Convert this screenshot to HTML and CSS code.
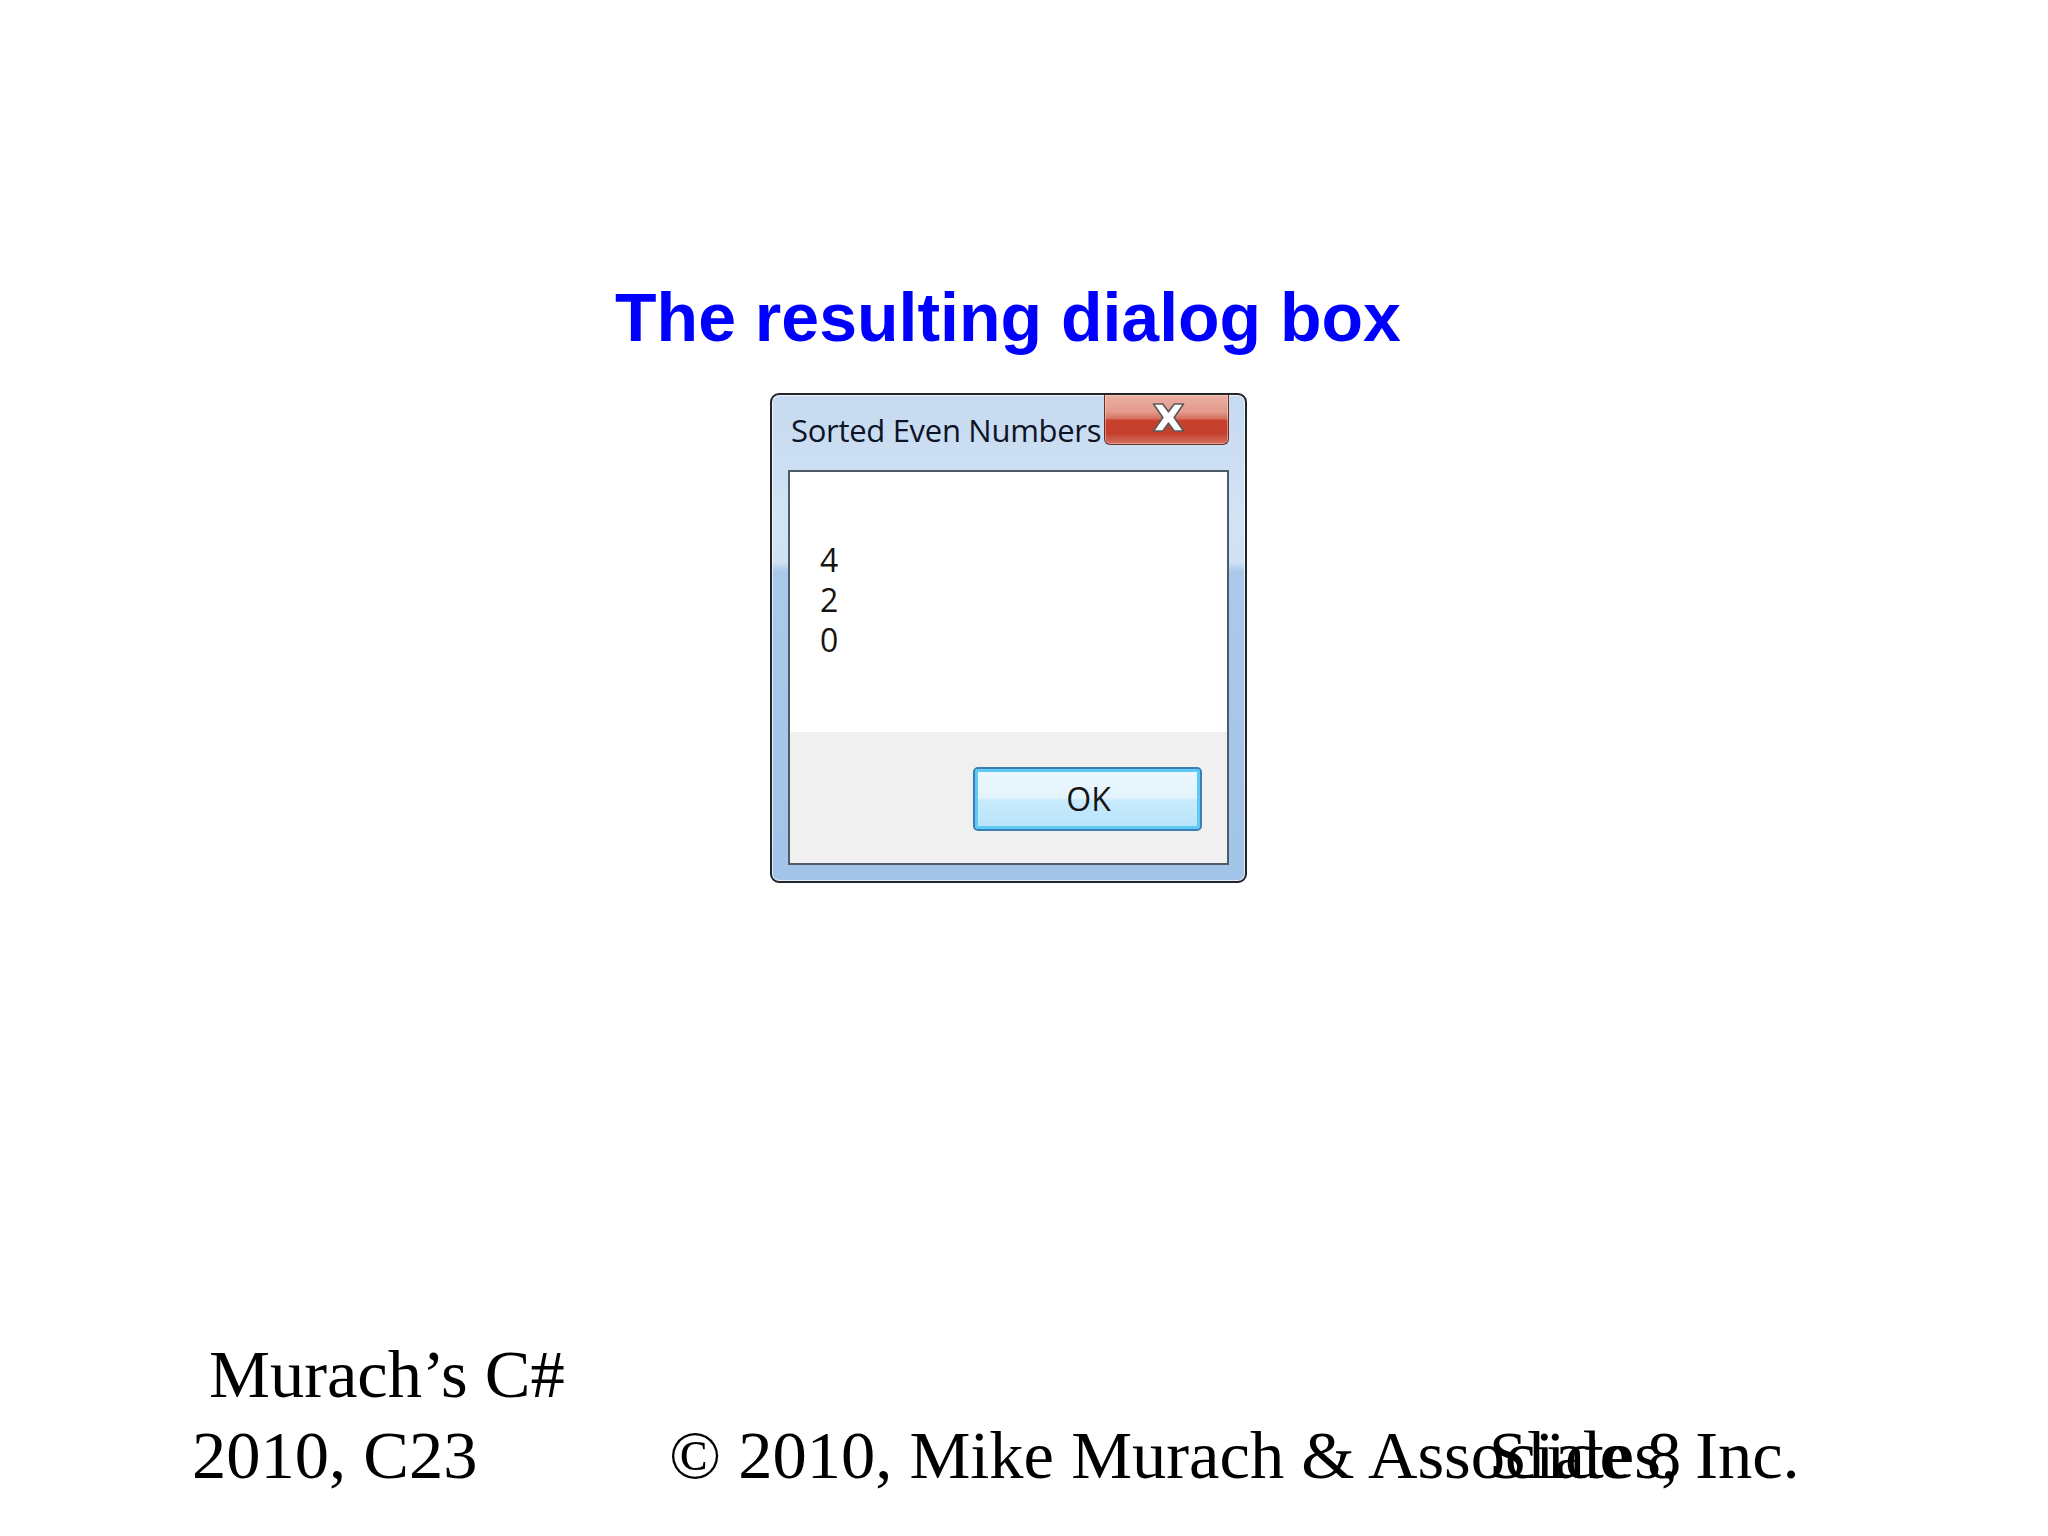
FILE: index.html
```html
<!DOCTYPE html>
<html lang="en">
<head>
<meta charset="utf-8">
<title>The resulting dialog box</title>
<link rel="stylesheet" href="styles.css">
</head>
<body>
<div class="slide">
  <div class="content">
    <h1 class="title">The resulting dialog box</h1>
    <div class="dialog">
      <div class="titlebar">
        <span class="caption">Sorted Even Numbers</span>
        <div class="close">
          <svg class="close-x" width="33" height="29" viewBox="0 0 31 28">
            <path d="M1 1 H10 L15.5 8.5 L21 1 H30 L21 14 L30 27 H21 L15.5 19.5 L10 27 H1 L10 14 Z" fill="#ffffff" stroke="#5b5b5b" stroke-width="1.6" stroke-linejoin="round"/>
          </svg>
        </div>
      </div>
      <div class="client">
        <div class="message">
          <div class="line">4</div>
          <div class="line">2</div>
          <div class="line">0</div>
        </div>
        <div class="buttons">
          <div class="ok"><span>OK</span></div>
        </div>
      </div>
    </div>
  </div>
  <div class="footer">
    <div class="book">
      <div class="book-line indent">Murach’s C#</div>
      <div class="book-line">2010, C23</div>
    </div>
    <div class="copyright">© 2010, Mike Murach &amp; Associates, Inc.</div>
    <div class="slideno">Slide 8</div>
  </div>
</div>
</body>
</html>
```

FILE: styles.css
```css
html, body {
  margin: 0;
  padding: 0;
  background: #ffffff;
}

.slide {
  width: 2048px;
  height: 1536px;
  display: flex;
  flex-direction: column;
  background: #ffffff;
  overflow: hidden;
}

.content {
  width: 2016px;
  display: flex;
  flex-direction: column;
  align-items: center;
}

.title {
  margin: 283px 0 0 0;
  font-family: "Liberation Sans", Arial, sans-serif;
  font-weight: bold;
  font-size: 68px;
  line-height: 68px;
  color: #0000ff;
  white-space: nowrap;
}

/* ---------- dialog ---------- */
.dialog {
  margin-top: 42px;
  margin-left: 1px;
  width: 477px;
  height: 490px;
  box-sizing: border-box;
  border: 2px solid #22262b;
  border-radius: 9px;
  padding: 0 16px 16px 16px;
  display: flex;
  flex-direction: column;
  background: linear-gradient(to bottom, #c6daf0 0px, #cbdef2 60px, #d2e3f4 120px, #cfe1f3 168px, #abc9ea 176px, #a2c4e8 100%);
  box-shadow: inset 0 0 0 1px rgba(255, 255, 255, 0.7);
  font-family: "Open Sans", "Noto Sans", sans-serif;
}

.titlebar {
  height: 75px;
  display: flex;
  align-items: flex-start;
}

.caption {
  margin-top: 15px;
  margin-left: 3px;
  font-size: 31px;
  line-height: 40px;
  color: #0c1426;
  white-space: nowrap;
  letter-spacing: -0.3px;
}

.close {
  margin-left: auto;
  width: 125px;
  height: 50px;
  box-sizing: border-box;
  border: 1px solid #6b2e26;
  border-top: none;
  border-radius: 0 0 6px 6px;
  background: linear-gradient(to bottom, #eab0a4 0%, #e39a8b 35%, #d6705f 48%, #c9402c 52%, #c43f2d 78%, #d2705f 100%);
  box-shadow: inset 0 0 0 1px rgba(255, 220, 210, 0.45);
  display: flex;
  align-items: center;
  justify-content: center;
  padding-bottom: 4px;
  padding-left: 4px;
}

.close-x {
  display: block;
}

.client {
  flex: 1;
  display: flex;
  flex-direction: column;
  border: 2px solid #4f5a67;
  background: #f0f0f0;
}

.message {
  height: 260px;
  box-sizing: border-box;
  background: #ffffff;
  padding: 68px 0 0 30px;
}

.line {
  font-size: 32px;
  line-height: 40px;
  color: #141414;
}

.buttons {
  flex: 1;
  display: flex;
  justify-content: flex-end;
  align-items: flex-start;
  padding: 35px 25px 0 0;
}

.ok {
  width: 229px;
  height: 64px;
  box-sizing: border-box;
  border: 2px solid #3a7fb3;
  border-radius: 5px;
  box-shadow: inset 0 0 0 3px #5fcaf4;
  background: linear-gradient(to bottom, #eef8fe 0%, #e2f3fd 48%, #c8eafc 52%, #b8e3fb 100%);
  display: flex;
  align-items: center;
  justify-content: center;
}

.ok span {
  font-size: 32px;
  line-height: 40px;
  color: #151515;
  margin-left: 2px;
}

/* ---------- footer ---------- */
.footer {
  margin-top: auto;
  padding-bottom: 40px;
  display: grid;
  grid-template-columns: 1fr;
  grid-template-rows: auto;
  font-family: "Liberation Serif", "Times New Roman", serif;
  font-size: 68.5px;
  line-height: 81px;
  color: #000000;
}

.book,
.copyright,
.slideno {
  grid-row: 1;
  grid-column: 1;
  white-space: nowrap;
}

.book {
  margin-left: 192px;
}

.indent {
  padding-left: 17px;
}

.copyright {
  align-self: end;
  margin-left: 669px;
}

.slideno {
  align-self: end;
  margin-left: 1489px;
}
```
